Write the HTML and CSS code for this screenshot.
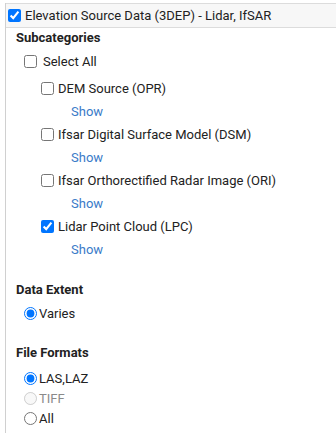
FILE: index.html
```html
<!DOCTYPE html>
<html>
<head>
<meta charset="utf-8">
<link rel="stylesheet" href="styles.css">
</head>
<body>
<div class="panel">
  <label class="header"><input type="checkbox" checked><span>Elevation Source Data (3DEP) - Lidar, IfSAR</span></label>
  <div class="body">
    <div class="title">Subcategories</div>
    <label class="row selall"><input type="checkbox"><span>Select All</span></label>
    <div class="subs">
      <label class="row first"><input type="checkbox"><span>DEM Source (OPR)</span></label>
      <div class="row show"><a>Show</a></div>
      <label class="row"><input type="checkbox"><span>Ifsar Digital Surface Model (DSM)</span></label>
      <div class="row show"><a>Show</a></div>
      <label class="row"><input type="checkbox"><span>Ifsar Orthorectified Radar Image (ORI)</span></label>
      <div class="row show"><a>Show</a></div>
      <label class="row"><input type="checkbox" checked><span>Lidar Point Cloud (LPC)</span></label>
      <div class="row show"><a>Show</a></div>
    </div>
    <div class="title sec">Data Extent</div>
    <label class="radio varies"><input type="radio" name="ext" checked><span>Varies</span></label>
    <div class="title sec">File Formats</div>
    <div class="radios">
      <label class="radio"><input type="radio" name="fmt" checked><span>LAS,LAZ</span></label>
      <label class="radio disabled"><input type="radio" name="fmt" disabled><span>TIFF</span></label>
      <label class="radio"><input type="radio" name="fmt"><span>All</span></label>
    </div>
  </div>
</div>
</body>
</html>
```

FILE: styles.css
```css
html, body {
  margin: 0;
  padding: 0;
  background: #fff;
  overflow: hidden;
}
body {
  font-family: Roboto, "Open Sans", sans-serif;
  font-size: 13px;
  color: #222;
}
.panel {
  margin: 3px 0 0 5px;
  width: 345px;
  border-left: 1px solid #d0d0d0;
  padding-bottom: 5px;
}
.header {
  display: flex;
  align-items: center;
  height: 23px;
  border: 1px solid #dcdcdc;
  border-left: none;
  background: #f7f7f7;
}
.header input {
  margin: 0 4px 0 2px;
  width: 13px;
  height: 13px;
}
.body {
  padding-left: 10px;
}
.title {
  font-weight: 700;
  line-height: 20px;
  height: 20px;
}
.sec {
  margin-top: 19px;
}
.row {
  display: flex;
  align-items: center;
  height: 23px;
}
.row input {
  margin: 0 4px 0 0;
  width: 13px;
  height: 13px;
}
.selall {
  margin: 2px 0 0 8px;
}
.selall input {
  margin-right: 6px;
}
.subs {
  margin-left: 25px;
}
.subs .first {
  margin-top: 4px;
}
.show a {
  margin-left: 30px;
  color: #3a7bc8;
}
.radio {
  display: flex;
  align-items: center;
  height: 20px;
  margin-left: 8px;
}
.radio input {
  margin: 0 2px 0 0;
  width: 13px;
  height: 13px;
}
.varies {
  margin-top: 2px;
  height: 22px;
}
.radios {
  margin-top: 5px;
}
.disabled span {
  color: #8a8a8a;
}
```
